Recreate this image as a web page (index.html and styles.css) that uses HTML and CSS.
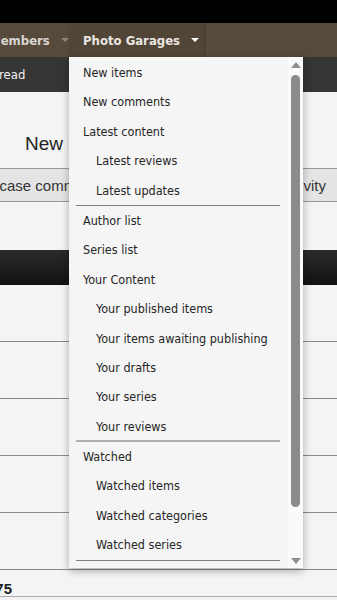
FILE: index.html
```html
<!DOCTYPE html>
<html lang="en">

<head>
    <meta charset="UTF-8">
    <meta name="viewport" content="width=device-width, initial-scale=1.0">
    <title>Photo Garages</title>
    <link rel="stylesheet" href="styles.css">
</head>

<body>
    <div class="topbar"></div>

    <nav class="navbar">
        <div class="nav-tab nav-first">
            <span class="nav-label">Members</span>
            <span class="nav-arrow arrow-dim"></span>
        </div>
        <div class="nav-tab nav-selected">
            <span class="nav-label">Photo Garages</span>
            <span class="nav-arrow"></span>
        </div>
    </nav>

    <div class="subnav">
        <span class="subnav-link">read</span>
    </div>

    <main class="content">
        <h2 class="page-title">New posts</h2>

        <div class="tab-strip">
            <span class="tab tab-left">Showcase comments</span>
            <span class="tab tab-right">Latest activity</span>
        </div>

        <div class="block-head"></div>

        <div class="list-row"></div>
        <div class="list-row"></div>
        <div class="list-row"></div>
        <div class="list-row"></div>
        <div class="list-row"></div>
        <div class="list-row list-last">
            <span class="count">275</span>
        </div>
    </main>

    <!-- dropdown menu of the selected tab -->
    <div class="menu">
        <ul class="menu-list">
            <li class="menu-item">New items</li>
            <li class="menu-item">New comments</li>
            <li class="menu-item">Latest content</li>
            <li class="menu-item sub">Latest reviews</li>
            <li class="menu-item sub">Latest updates</li>
            <li class="menu-sep"></li>
            <li class="menu-item">Author list</li>
            <li class="menu-item">Series list</li>
            <li class="menu-item">Your Content</li>
            <li class="menu-item sub">Your published items</li>
            <li class="menu-item sub">Your items awaiting publishing</li>
            <li class="menu-item sub">Your drafts</li>
            <li class="menu-item sub">Your series</li>
            <li class="menu-item sub">Your reviews</li>
            <li class="menu-sep sep-light"></li>
            <li class="menu-item">Watched</li>
            <li class="menu-item sub">Watched items</li>
            <li class="menu-item sub">Watched categories</li>
            <li class="menu-item sub">Watched series</li>
            <li class="menu-sep"></li>
        </ul>
        <div class="scrollbar">
            <span class="scroll-up"></span>
            <span class="scroll-thumb"></span>
            <span class="scroll-down"></span>
        </div>
    </div>
</body>

</html>
```

FILE: styles.css
```css
html,
body {
    margin: 0;
    padding: 0;
    background-color: #f4f4f4;
    font-family: "DejaVu Sans Condensed", "DejaVu Sans", sans-serif;
    font-size: 13px;
    color: #2c2c2c;
}

body {
    width: 337px;
    height: 600px;
    overflow: hidden;
    position: relative;
}

* {
    box-sizing: border-box;
}

/* TOP */
.topbar {
    height: 23px;
    background-color: #000;
}

.navbar {
    display: flex;
    height: 34px;
    background-color: #564a3c;
}

.nav-tab {
    display: flex;
    align-items: center;
    gap: 8px;
    font-weight: bold;
    color: #e9e6e1;
}

.nav-first {
    width: 80px;
    margin-left: -11px;
    color: #d8d4ce;
}

.nav-selected {
    width: 135px;
    padding-left: 14px;
    background-color: #514537;
    box-shadow: 1px 0 2px rgba(0, 0, 0, 0.25);
}

.nav-arrow {
    width: 0;
    height: 0;
    border-left: 4px solid transparent;
    border-right: 4px solid transparent;
    border-top: 4px solid #fff;
    margin-left: 3px;
}

.arrow-dim {
    border-top-color: #8d857b;
}

.subnav {
    display: flex;
    align-items: center;
    height: 35px;
    background-color: #353535;
    color: #f2f2f2;
}

.subnav-link {
    margin-left: -1px;
}

/* CONTENT */
.content {
    display: flex;
    flex-direction: column;
}

.page-title {
    margin: 41px 0 0 25px;
    height: 35px;
    font-family: "Liberation Sans", sans-serif;
    font-size: 19px;
    font-weight: normal;
    color: #222;
}

.tab-strip {
    display: flex;
    justify-content: space-between;
    align-items: center;
    height: 34px;
    background-color: #e4e4e4;
    border-top: 1px solid #999;
    border-bottom: 1px solid #999;
    font-family: "Liberation Sans", sans-serif;
    font-size: 15px;
    color: #333;
}

.tab-left {
    margin-left: -38px;
}

.tab-right {
    margin-right: 11px;
}

.block-head {
    margin-top: 48px;
    height: 35px;
    background: linear-gradient(#2b2b2b, #121212);
}

.list-row {
    height: 57px;
    border-bottom: 1px solid #8a8a8a;
}

.list-last {
    display: flex;
    align-items: flex-end;
    height: 27px;
    border-bottom: 1px solid #aaa;
}

.count {
    margin-left: -13px;
    margin-bottom: -1px;
    font-family: "Liberation Sans", sans-serif;
    font-size: 15px;
    font-weight: bold;
    color: #222;
}

/* DROPDOWN */
.menu {
    position: absolute;
    left: 69px;
    top: 57px;
    width: 234px;
    height: 511px;
    display: flex;
    background-color: #f5f5f5;
    box-shadow: 0 3px 8px rgba(0, 0, 0, 0.3);
}

.menu-list {
    flex: 1;
    list-style: none;
    margin: 0;
    padding: 1px 0 0;
}

.menu-item {
    height: 29.4px;
    line-height: 29.4px;
    padding-left: 14px;
    white-space: nowrap;
    font-size: 12.5px;
    color: #262626;
}

.menu-item.sub {
    padding-left: 27px;
}

.menu-sep {
    height: 1px;
    margin: 0 8px 0 7px;
    background-color: #7e7e7e;
}

.sep-light {
    height: 2px;
    margin-top: -1px;
    background-color: #adadad;
}

.scrollbar {
    width: 15px;
    display: flex;
    flex-direction: column;
    align-items: center;
    padding: 5px 0 4px;
    background-color: #fafafa;
}

.scroll-up,
.scroll-down {
    width: 0;
    height: 0;
    border-left: 5px solid transparent;
    border-right: 5px solid transparent;
}

.scroll-up {
    border-bottom: 6px solid #8e8e8e;
}

.scroll-down {
    margin-top: auto;
    border-top: 6px solid #8e8e8e;
}

.scroll-thumb {
    width: 9px;
    height: 432px;
    margin-top: 7px;
    border-radius: 5px;
    background-color: #8b8b8b;
}
```
